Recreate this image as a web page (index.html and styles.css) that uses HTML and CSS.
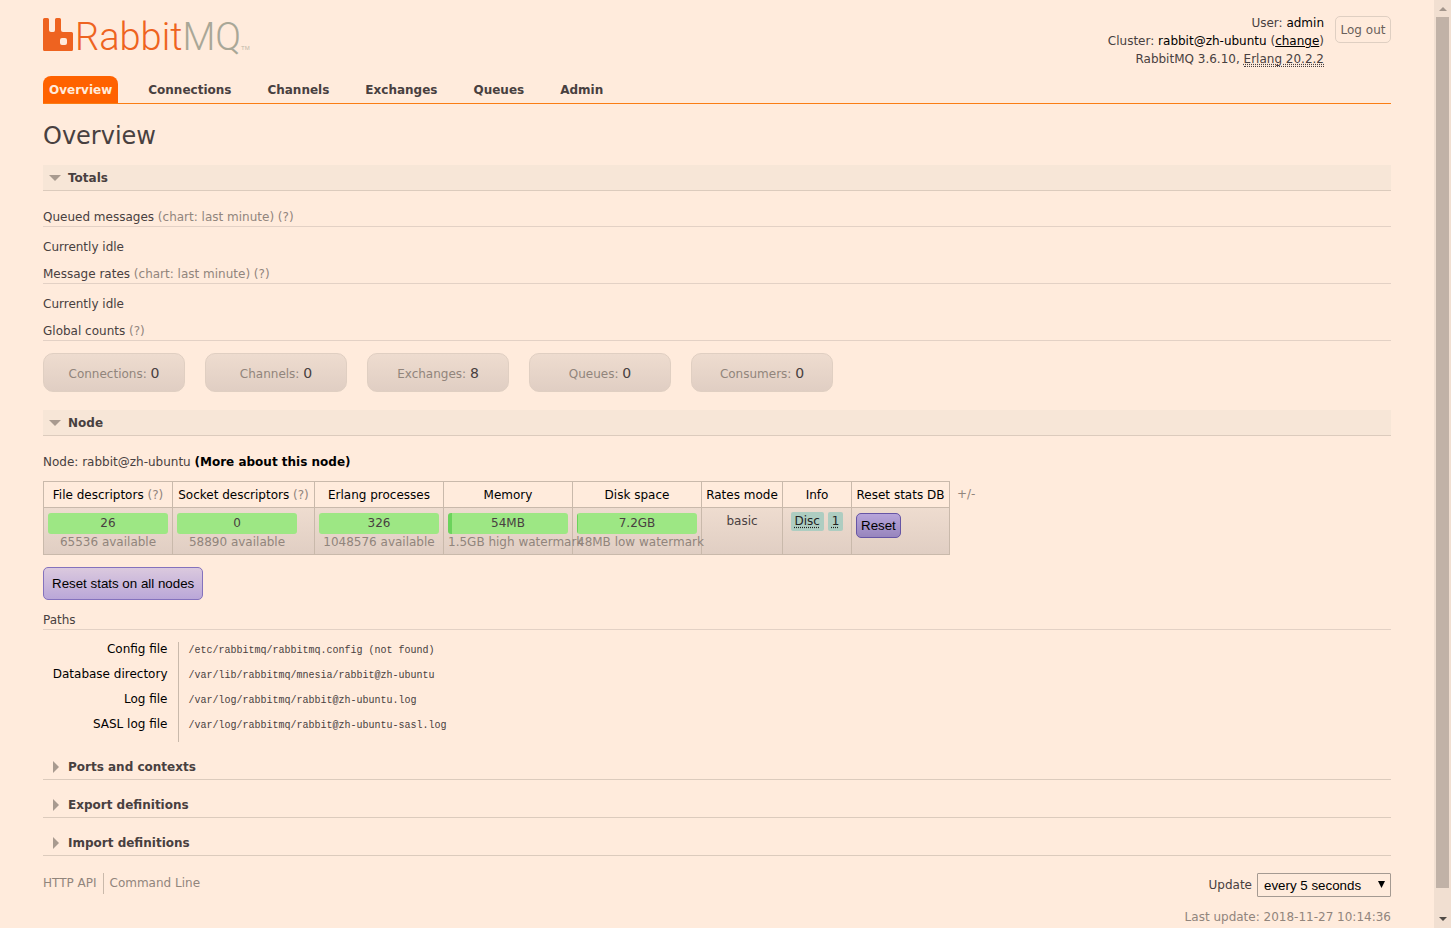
FILE: index.html
```
<!DOCTYPE html>
<html lang="en">

<head>
    <meta charset="UTF-8">
    <meta name="viewport" content="width=device-width, initial-scale=1.0">
    <title>RabbitMQ Management</title>
    <link rel="stylesheet" href="styles.css">
</head>

<body>
    <div id="outer">
        <header>
            <div class="top">
                <a class="logo" href="#" aria-label="RabbitMQ">
                    <svg width="230" height="42" viewBox="0 0 230 42">
                        <path class="mark" fill-rule="evenodd" d="M1.500 2H4.500Q6 2 6 3.500V14Q6 16 8 16H10.500Q12 16 12 14V3.500Q12 2 13.500 2H16.500Q18 2 18 3.500V14Q18 16 20 16H28.500Q30 16 30 17.500V33.500Q30 35 28.500 35H1.500Q0 35 0 33.500V3.500Q0 2 1.500 2ZM19 22Q17 22 17 24V27Q17 29 19 29H22Q24 29 24 27V24Q24 22 22 22Z"/>
                        <text class="word" x="32" y="34">Rabbit<tspan class="mq">MQ</tspan><tspan class="tm">TM</tspan></text>
                    </svg>
                </a>
                <div class="session">
                    <ul>
                        <li>User: <b>admin</b></li>
                        <li>Cluster: <b>rabbit@zh-ubuntu</b> (<a href="#">change</a>)</li>
                        <li>RabbitMQ 3.6.10, <abbr>Erlang 20.2.2</abbr></li>
                    </ul>
                    <button type="button" class="logout">Log out</button>
                </div>
            </div>
            <nav>
                <a class="selected" href="#">Overview</a>
                <a href="#">Connections</a>
                <a href="#">Channels</a>
                <a href="#">Exchanges</a>
                <a href="#">Queues</a>
                <a href="#">Admin</a>
            </nav>
        </header>

        <main>
            <h1>Overview</h1>

            <section>
                <h2 class="open">Totals</h2>
                <div class="hider">
                    <h3>Queued messages <span class="help">(chart: last minute) (?)</span></h3>
                    <p class="idle">Currently idle</p>
                    <h3>Message rates <span class="help">(chart: last minute) (?)</span></h3>
                    <p class="idle">Currently idle</p>
                    <h3>Global counts <span class="help">(?)</span></h3>
                    <div class="counts">
                        <div>Connections: <strong>0</strong></div>
                        <div>Channels: <strong>0</strong></div>
                        <div>Exchanges: <strong>8</strong></div>
                        <div>Queues: <strong>0</strong></div>
                        <div>Consumers: <strong>0</strong></div>
                    </div>
                </div>
            </section>

            <section>
                <h2 class="open">Node</h2>
                <div class="hider">
                    <p class="node">Node: rabbit@zh-ubuntu <a href="#">(More about this node)</a></p>
                    <div class="stats">
                        <table class="list">
                            <colgroup>
                                <col class="bar-col">
                                <col class="socket-col">
                                <col class="bar-col">
                                <col class="bar-col">
                                <col class="bar-col">
                                <col class="rates-col">
                                <col class="info-col">
                                <col class="reset-col">
                            </colgroup>
                            <thead>
                                <tr>
                                    <th>File descriptors <span class="help">(?)</span></th>
                                    <th>Socket descriptors <span class="help">(?)</span></th>
                                    <th>Erlang processes</th>
                                    <th>Memory</th>
                                    <th>Disk space</th>
                                    <th>Rates mode</th>
                                    <th>Info</th>
                                    <th>Reset stats DB</th>
                                </tr>
                            </thead>
                            <tbody>
                                <tr>
                                    <td><div class="status-bar"><div class="bar">26</div><sub>65536 available</sub></div></td>
                                    <td><div class="status-bar"><div class="bar">0</div><sub>58890 available</sub></div></td>
                                    <td><div class="status-bar"><div class="bar">326</div><sub>1048576 available</sub></div></td>
                                    <td><div class="status-bar"><div class="bar memory">54MB</div><sub>1.5GB high watermark</sub></div></td>
                                    <td><div class="status-bar"><div class="bar disk">7.2GB</div><sub>48MB low watermark</sub></div></td>
                                    <td class="plain">basic</td>
                                    <td class="plain"><abbr class="tag">Disc</abbr> <abbr class="tag">1</abbr></td>
                                    <td class="action"><button type="button" class="small">Reset</button></td>
                                </tr>
                            </tbody>
                        </table>
                        <span class="plus-minus">+/-</span>
                    </div>
                    <button type="button" class="reset-all">Reset stats on all nodes</button>
                    <h3>Paths</h3>
                    <table class="facts">
                        <tr>
                            <th>Config file</th>
                            <td>/etc/rabbitmq/rabbitmq.config (not found)</td>
                        </tr>
                        <tr>
                            <th>Database directory</th>
                            <td>/var/lib/rabbitmq/mnesia/rabbit@zh-ubuntu</td>
                        </tr>
                        <tr>
                            <th>Log file</th>
                            <td>/var/log/rabbitmq/rabbit@zh-ubuntu.log</td>
                        </tr>
                        <tr>
                            <th>SASL log file</th>
                            <td>/var/log/rabbitmq/rabbit@zh-ubuntu-sasl.log</td>
                        </tr>
                    </table>
                </div>
            </section>

            <h2 class="closed">Ports and contexts</h2>
            <h2 class="closed">Export definitions</h2>
            <h2 class="closed">Import definitions</h2>
        </main>

        <footer>
            <div class="links">
                <a href="#">HTTP API</a>
                <a href="#">Command Line</a>
            </div>
            <div class="update">
                <div class="update-row">
                    <label for="update-every">Update</label>
                    <span class="select-wrap">
                        <select id="update-every">
                            <option selected>every 5 seconds</option>
                            <option>every 30 seconds</option>
                            <option>every 5 minutes</option>
                            <option>manually</option>
                        </select>
                        <svg width="7" height="7" viewBox="0 0 7 7"><path d="M0 0H7L3.500 7Z"/></svg>
                    </span>
                </div>
                <div class="status">Last update: 2018-11-27 10:14:36</div>
            </div>
        </footer>
    </div>

    <div id="scrollbar">
        <span class="arrow up"></span>
        <div class="thumb"></div>
        <span class="arrow down"></span>
    </div>
</body>

</html>
```
FILE: styles.css
```
* {
    box-sizing: border-box;
}

body {
    display: flex;
    align-items: flex-start;
    margin: 0;
    background: #ffebdc;
    color: #484040;
    font: 12px/18px Verdana, "DejaVu Sans", sans-serif;
}

a {
    color: #000;
}

h1, h2, h3, p, ul {
    margin: 0;
    padding: 0;
}

#outer {
    flex: 1;
    min-width: 0;
    padding: 16px 43px 0;
}

/* header */

.top {
    display: flex;
    justify-content: space-between;
    height: 60px;
}

.logo svg {
    display: block;
}

.mark {
    fill: #ee6320;
}

.word {
    font-family: Roboto, "Open Sans", sans-serif;
    font-size: 38px;
    font-weight: 300;
    fill: #ee6320;
}

.mq {
    fill: #a9a797;
}

.tm {
    font-family: "Liberation Sans", Arial, sans-serif;
    font-size: 6px;
    fill: #c0b9aa;
}

.session {
    display: flex;
    gap: 11px;
    align-items: flex-start;
}

.session ul {
    margin-top: -2px;
    list-style: none;
    text-align: right;
}

.session b {
    color: #000;
    font-weight: normal;
}

.session abbr {
    border-bottom: 1px dotted #484040;
    text-decoration: underline dotted;
}

.logout {
    min-width: 56px;
    height: 27px;
    padding: 0 4px;
    border: 1px solid #dfcfc2;
    border-radius: 5px;
    background: none;
    color: #6a605a;
    font: inherit;
    white-space: nowrap;
}

nav {
    display: flex;
    gap: 24px;
    border-bottom: 1px solid #fa7d14;
}

nav a {
    padding: 5px 6px 4px;
    border-radius: 8px 8px 0 0;
    color: #484040;
    font-weight: bold;
    text-decoration: none;
}

nav .selected {
    background: #ff6200;
    color: #ffebdc;
}

/* sections */

h1 {
    padding: 18px 0 14px;
    font-size: 24px;
    font-weight: normal;
    line-height: 29px;
}

h2 {
    display: flex;
    align-items: center;
    height: 26px;
    border-bottom: 1px solid #dccbbd;
    font-size: 12px;
}

h2::before {
    content: "";
    border-style: solid;
}

.open {
    padding-left: 6px;
    background: #f7e6d7;
}

.open::before {
    margin-right: 7px;
    border-width: 6px 6px 0;
    border-color: #a89a8f transparent;
}

.closed {
    margin-bottom: 12px;
    padding-left: 10px;
}

.closed::before {
    margin-right: 9px;
    border-width: 6px 0 6px 6px;
    border-color: transparent #a89a8f;
}

.hider {
    padding-top: 17px;
}

h3 {
    border-bottom: 1px solid #e3d1c5;
    font-size: 12px;
    font-weight: normal;
    line-height: 18px;
}

.help, .plus-minus {
    color: #91857c;
}

.idle {
    padding: 11px 0 9px;
}

.counts {
    display: flex;
    flex-wrap: wrap;
    gap: 20px;
    padding: 12px 0 18px;
}

.counts div {
    width: 142px;
    height: 39px;
    border: 1px solid #e0cfc2;
    border-radius: 10px;
    background: linear-gradient(#eedccf, #e0cec3);
    color: #91857c;
    line-height: 39px;
    text-align: center;
}

.counts strong {
    color: #484040;
    font-size: 14px;
    font-weight: normal;
}

/* node table */

.node a {
    font-weight: bold;
    text-decoration: none;
}

.stats {
    display: flex;
    gap: 7px;
    padding: 10px 0 12px;
}

.plus-minus {
    padding-top: 4px;
}

.list {
    border-collapse: collapse;
    table-layout: fixed;
    width: 907px;
}

.bar-col {
    width: 129px;
}

.socket-col {
    width: 142px;
}

.rates-col {
    width: 81px;
}

.info-col {
    width: 69px;
}

.reset-col {
    width: 98px;
}

.list th {
    height: 26px;
    padding: 0;
    border: 1px solid #c9b9ab;
    color: #000;
    font-weight: normal;
    white-space: nowrap;
}

.list tbody tr {
    background: linear-gradient(#eedccf, #e0cec3);
}

.list td {
    height: 47px;
    padding: 5px 4px 0;
    border: 1px solid #c9b9ab;
    vertical-align: top;
}

.list .plain {
    padding-top: 4px;
    text-align: center;
}

.status-bar {
    width: 120px;
    text-align: center;
    white-space: nowrap;
}

.bar {
    height: 21px;
    border-radius: 3px;
    background: #9de784;
    line-height: 21px;
}

.memory {
    background: linear-gradient(90deg, #6bd35c 4px, #9de784 4px);
}

.disk {
    background: linear-gradient(90deg, #6bd35c 1px, #9de784 1px);
}

.status-bar sub {
    display: block;
    color: #91857c;
    font-size: 12px;
    line-height: 16px;
}

.tag {
    display: inline-block;
    height: 19px;
    padding: 0 4px;
    border-radius: 2px;
    background: #aecdc1;
    color: #222;
    text-decoration: underline dotted;
    text-underline-offset: 2px;
}

.small, .reset-all {
    border: 1px solid #8472bd;
    border-radius: 5px;
    background: linear-gradient(#dbc9de, #baa7d8);
    color: #000;
    font-family: "Liberation Sans", Arial, sans-serif;
}

.small {
    display: block;
    height: 25px;
    padding: 0 4px;
    border-color: #6655a5;
    background: linear-gradient(#b7a5da, #9785bd);
}

.reset-all {
    display: block;
    height: 33px;
    margin-bottom: 11px;
    padding: 0 8px;
}

/* paths */

.facts {
    margin: 12px 0;
    border-collapse: collapse;
}

.facts th {
    width: 135px;
    height: 25px;
    padding: 0 10px 10px 0;
    border-right: 1px solid #c9b9ab;
    color: #000;
    font-weight: normal;
    line-height: 15px;
    text-align: right;
    white-space: nowrap;
}

.facts td {
    padding: 0 0 8px 10px;
    font-family: "Liberation Mono", "Courier New", monospace;
    font-size: 10px;
    line-height: 16px;
}

/* footer */

footer {
    display: flex;
    justify-content: space-between;
    align-items: flex-start;
    padding-top: 5px;
}

.links {
    display: flex;
}

.links a {
    color: #91857c;
    line-height: 21px;
    text-decoration: none;
}

.links a + a {
    margin-left: 6px;
    padding-left: 6px;
    border-left: 1px solid #c9b9ab;
}

.update {
    text-align: right;
}

.update-row {
    display: flex;
    gap: 5px;
    align-items: center;
    justify-content: flex-end;
}

.select-wrap {
    position: relative;
}

.select-wrap svg {
    position: absolute;
    top: 8px;
    right: 6px;
    pointer-events: none;
}

select {
    display: block;
    appearance: none;
    width: 134px;
    height: 24px;
    padding: 0 6px;
    border: 1px solid #a59a92;
    border-radius: 1px;
    background: #ffebdc;
    color: #000;
    font-family: "Liberation Sans", Arial, sans-serif;
}

.status {
    padding-top: 11px;
    color: #91857c;
}

/* scrollbar */

#scrollbar {
    position: sticky;
    top: 0;
    display: flex;
    flex-direction: column;
    align-items: center;
    width: 17px;
    height: 100vh;
    padding: 7px 0;
    background: #f1dfd1;
}

.thumb {
    flex: 1;
    width: 13px;
    margin: 6px 0 29px;
    background: #c1b2a7;
}

.arrow {
    border: 4px solid transparent;
}

.up {
    border-top: 0;
    border-bottom-color: #a3968c;
}

.down {
    border-bottom: 0;
    border-top-color: #504a45;
}
```
